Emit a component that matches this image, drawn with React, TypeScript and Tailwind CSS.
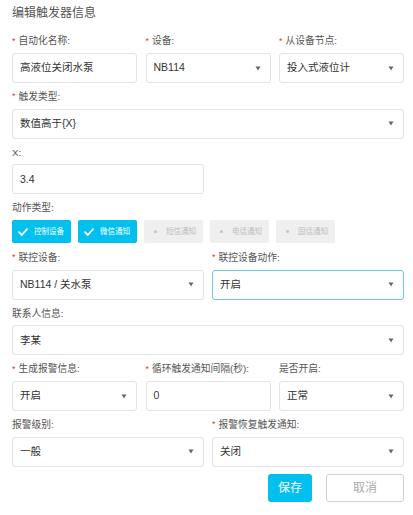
import React from "react";

const FONT = { fontFamily: '"Liberation Sans", "Noto Sans CJK SC", sans-serif' };

function Arrow() {
  return (
    <svg width="6" height="5" viewBox="0 0 6 5" className="shrink-0">
      <path d="M0.5 0.5 L5.5 0.5 L3 4.5 Z" fill="#666" />
    </svg>
  );
}

function Label({ text, req }: { text: string; req?: boolean }) {
  return (
    <div className="h-[14px] flex items-center text-[9.75px] text-[#555] leading-none whitespace-nowrap">
      {req && <span className="text-[#e33] mr-[3px] text-[9px]">*</span>}
      <span>{text}</span>
    </div>
  );
}

function Box({ value, select, focus }: { value: string; select?: boolean; focus?: boolean }) {
  return (
    <div
      className={`h-[30px] rounded-[3px] border bg-white flex items-center justify-between pl-[7px] pr-[9px] text-[10.5px] text-[#333] ${
        focus ? "border-[#6ccbe8]" : "border-[#e2e2e2]"
      }`}
    >
      <span className="whitespace-nowrap">{value}</span>
      {select && <Arrow />}
    </div>
  );
}

function Field({
  label,
  req,
  value,
  select,
  focus,
}: {
  label: string;
  req?: boolean;
  value: string;
  select?: boolean;
  focus?: boolean;
}) {
  return (
    <div className="flex flex-col gap-[5px]">
      <Label text={label} req={req} />
      <Box value={value} select={select} focus={focus} />
    </div>
  );
}

function Check() {
  return (
    <svg width="10" height="8" viewBox="0 0 10 8" className="shrink-0">
      <path d="M1 4.2 L3.8 7 L9 1.2" stroke="#fff" strokeWidth="1.8" fill="none" strokeLinecap="round" strokeLinejoin="round" />
    </svg>
  );
}

function ActBtn({ text, on }: { text: string; on?: boolean }) {
  return (
    <div
      className={`w-[59px] h-[23px] rounded-[2px] flex items-center pl-[6px] gap-[6px] text-[7.5px] ${
        on ? "bg-[#00c0ef] text-white" : "bg-[#efefef] text-[#bdbdbd]"
      }`}
    >
      {on ? (
        <Check />
      ) : (
        <span className="w-[10px] flex justify-center">
          <span className="w-[3px] h-[3px] rounded-full bg-[#c4c4c4]" />
        </span>
      )}
      <span className="whitespace-nowrap">{text}</span>
    </div>
  );
}

export default function App() {
  return (
    <div className="w-[413px] h-[515px] bg-white pl-[12px]" style={FONT}>
      <div className="w-[392px] flex flex-col">
        <div className="h-[26px] flex items-center text-[12px] text-[#555]">编辑触发器信息</div>
        <div className="mt-[8px] flex flex-col gap-[6.7px]">
          <div className="grid grid-cols-3 gap-[8.5px]">
            <Field label="自动化名称:" req value="高液位关闭水泵" />
            <Field label="设备:" req value="NB114" select />
            <Field label="从设备节点:" req value="投入式液位计" select />
          </div>
          <Field label="触发类型:" req value="数值高于{X}" select />
          <div className="grid grid-cols-2 gap-[8px]">
            <Field label="X:" value="3.4" />
            <div />
          </div>
          <div className="flex flex-col gap-[5px]">
            <Label text="动作类型:" />
            <div className="flex gap-[7px]">
              <ActBtn text="控制设备" on />
              <ActBtn text="微信通知" on />
              <ActBtn text="短信通知" />
              <ActBtn text="电话通知" />
              <ActBtn text="固话通知" />
            </div>
          </div>
          <div className="grid grid-cols-2 gap-[8px] mt-[1px]">
            <Field label="联控设备:" req value="NB114 / 关水泵" select />
            <Field label="联控设备动作:" req value="开启" select focus />
          </div>
          <Field label="联系人信息:" value="李某" select />
          <div className="grid grid-cols-3 gap-[8.5px]">
            <Field label="生成报警信息:" req value="开启" select />
            <Field label="循环触发通知间隔(秒):" req value="0" />
            <Field label="是否开启:" value="正常" select />
          </div>
          <div className="grid grid-cols-2 gap-[8px]">
            <Field label="报警级别:" value="一般" select />
            <Field label="报警恢复触发通知:" req value="关闭" select />
          </div>
        </div>
        <div className="mt-[7px] flex justify-end gap-[14px]">
          <div className="w-[44px] h-[28px] rounded-[3px] bg-[#00c0ef] text-white text-[12px] flex items-center justify-center">
            保存
          </div>
          <div className="w-[78px] h-[28px] rounded-[3px] border border-[#cfcfcf] bg-white text-[#aaa] text-[12px] flex items-center justify-center">
            取消
          </div>
        </div>
      </div>
    </div>
  );
}
